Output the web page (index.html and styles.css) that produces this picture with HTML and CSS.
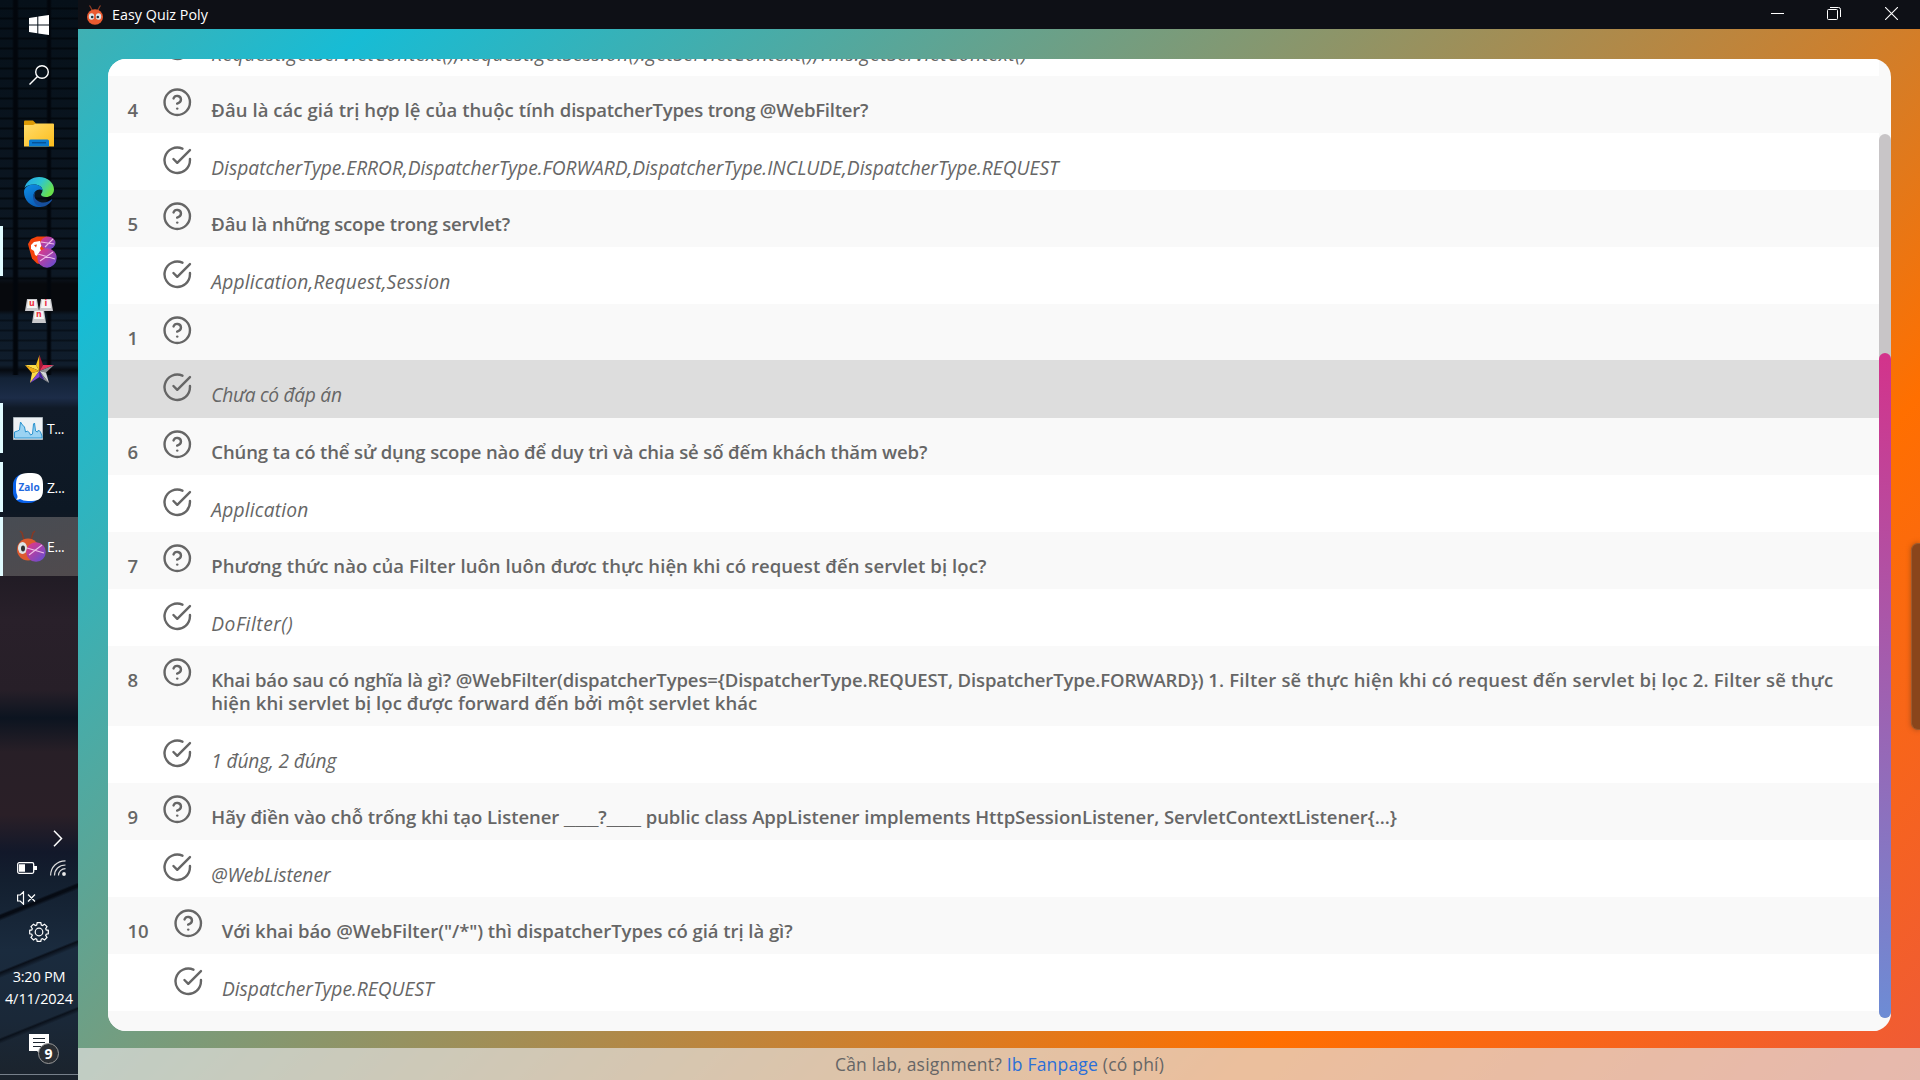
FILE: index.html
```
<!DOCTYPE html>
<html lang="vi">
<head>
<meta charset="utf-8">
<title>Easy Quiz Poly</title>
<link rel="stylesheet" href="styles.css">
</head>
<body>
<svg class="defs" aria-hidden="true">
  <symbol id="help" viewBox="0 0 24 24"><circle cx="12" cy="12" r="10"/><path d="M9.09 9a3 3 0 0 1 5.83 1c0 2-3 3-3 3"/><path d="M12 17h.01"/></symbol>
  <symbol id="check" viewBox="0 0 24 24"><path d="M22 11.08V12a10 10 0 1 1-5.93-9.14"/><path d="M22 4 12 14.01l-3-3"/></symbol>
  <linearGradient id="ball" x1="0" y1="0" x2="1" y2="1"><stop offset=".2" stop-color="#cf3b92"/><stop offset="1" stop-color="#5b4fd8"/></linearGradient>
</svg>
<div class="desktop">
  <aside class="taskbar">
    <div class="task start"><svg width="20" height="20" viewBox="0 0 20 20"><path fill="#fff" d="M0 3l8.3-1.200v7.700H0zM9.300 1.600 20 0v9.500H9.300zM0 10.500h8.300v7.700L0 17zM9.300 10.500H20V20L9.300 18.400z"/></svg></div>
    <div class="task search"><svg width="20" height="20" viewBox="0 0 20 20" fill="none" stroke="#fff" stroke-width="1.400"><circle cx="13" cy="7" r="6.300"/><path d="M8.500 11.500.5 19.500"/></svg></div>
    <div class="task"><svg width="30" height="27" viewBox="0 0 30 27"><defs><linearGradient id="fold" x1="0" y1="0" x2="1" y2="1"><stop offset="0" stop-color="#ffdc6b"/><stop offset="1" stop-color="#fdbd1c"/></linearGradient></defs><path fill="#dc9a05" d="M0 1.500Q0 .5 1 .5h8l3 3v3H0z"/><path fill="url(#fold)" d="M0 5h9l3-1.500h17q1 0 1 1V26.500H0z"/><path fill="#0b7bd0" d="M5 26.500V21q0-1.500 1.500-1.500h17Q25 19.500 25 21v5.500z"/><path stroke="#07427c" d="M8 22.800h14"/></svg></div>
    <div class="task edge"><svg width="30" height="30" viewBox="0 0 30 30"><defs><linearGradient id="e1" x1="0" y1="0" x2="1" y2=".5"><stop offset="0" stop-color="#22a5ee"/><stop offset=".55" stop-color="#2fc6cf"/><stop offset="1" stop-color="#68e04c"/></linearGradient><linearGradient id="e2" x1="0" y1="0" x2=".4" y2="1"><stop offset="0" stop-color="#0d8fe6"/><stop offset="1" stop-color="#0b5fb9"/></linearGradient></defs><path fill="url(#e1)" d="M.5 11C2 4.500 8 0 15 0c9 0 15 6 15 12.500 0 5-4 7.500-8 7.500-3 0-5-1-5-2.500 0-1 1.500-1.500 1.500-4C18.500 10 15 7.500 10 7.500 5.500 7.500 2 9 .5 11z"/><path fill="url(#e2)" d="M0 15C0 10 5 7.500 10 7.500c5 0 8.500 2.500 8.500 5.500-5-2-9 1.500-9 6 0 5 4 9 8.500 10.500-1 .5-2 .5-3 .5C6.500 30 0 23 0 15z"/><path fill="#164f9e" d="M12.500 14.500C9 17 10 23 16 25c5 1.500 9-.5 11.500-2.500.5-.5 1 0 .5.800C25 28 20 30 16.500 29.800 9 28 6.500 18 12.500 14.500z"/></svg></div>
    <div class="task running"><svg width="30" height="32" viewBox="0 0 30 32"><path fill="#f4430c" d="M4 3 10 .5h10l5 5-3 14-6 9-6-1-5-5L2 12 1 8z"/><path fill="#fff" d="M4 9l3-3 6-1 2 4-2 3 1 3-3 3-1 2-2-1-1-4-3-2z"/><path fill="#f4430c" d="M7 9l3-.5-1 3z"/><ellipse cx="21" cy="7" rx="7.500" ry="6.500" fill="url(#ball)"/><circle cx="20" cy="22" r="9.700" fill="url(#ball)"/><path stroke="#eebce8" stroke-width="1.100" d="M14 6l13 2M18 11l8-8M11 18l17 5M13 25l13-9"/></svg></div>
    <div class="task"><svg class="keys" width="28" height="24" viewBox="0 0 28 24"><g fill="#c9c9cc"><path d="M2 0h10l2 12H0zM16 0h10l2 12H14zM9 11h10l2 13H7z"/></g><g fill="#f5f5f5"><path d="M3 1h8l1 8H2zM17 1h8l1 8H16zM10 12h8l1 8H9z"/></g><g fill="#ee3344"><text x="4" y="7">u</text><text x="19.500" y="7">i</text><text x="11" y="18">n</text></g></svg></div>
    <div class="task star"><svg width="29" height="28" viewBox="0 0 29 28"><path fill="#f9c31b" d="M14.500 0v16L11 10z"/><path fill="#fcdc48" d="M14.500 16 11 10 0 10z"/><path fill="#f2ac14" d="M0 10l14.500 6L7 18z"/><path fill="#fcdc48" d="M7 18 5 28l9.500-12z"/><path fill="#a31736" d="M14.500 0 18 10l-3.500 6z"/><path fill="#e5345c" d="M18 10h11l-14.500 6z"/><path fill="#8d8d91" d="M29 10l-8 7.500-6.500-1.500z"/><path fill="#d5d5d8" d="M21 17.500 24 28 14.500 16z"/><path fill="#8d8d91" d="M14.500 16v6L24 28z"/><path fill="#8146d3" d="M14.500 16 5 28l9.500-6z"/><path fill="#43209b" d="M14.500 16v6l5 3z"/></svg></div>
    <div class="task wide running"><svg width="30" height="23" viewBox="0 0 30 23"><path fill="#edf1f5" stroke="#aab4bb" d="M.5.500h29v22H.5z"/><path fill="#9bd3f3" stroke="#2b93cf" d="M1.500 21V15l3-1 2-1 1-8 2 3 2 2 1 5 2-1 2 2 1 2 2-1 1-10 1-1 1 8 2 1 1-2 2 2 1.500 4v2z"/></svg><span>T...</span></div>
    <div class="task wide running"><svg class="zalo" width="30" height="30" viewBox="0 0 30 30"><rect width="27" height="29" y="1" rx="11" fill="#0a62ea"/><path fill="#fff" d="M15 0h4q11 0 11 11v6q0 11-11 11h-4q-5 0-8-2-2 1-4 .5 2-1.500 1.500-3.500Q3 20 3 16v-5Q3 0 15 0z"/><text x="5.500" y="17.500">Zalo</text></svg><span>Z...</span></div>
    <div class="task wide running current"><svg class="ant" width="30" height="33" viewBox="0 0 30 33"><path fill="none" stroke="#843a26" stroke-width="1.500" d="M4 1l2 2 2 7M19 1l-2 2-2 7"/><ellipse cx="12" cy="19.500" rx="11" ry="11" fill="#dd5a2f"/><ellipse cx="6.500" cy="18" rx="4.500" ry="6" fill="#dfe5e6"/><ellipse cx="7" cy="18.500" rx="2" ry="3" fill="#333"/><circle cx="20" cy="22" r="9.800" fill="url(#ball)"/><path stroke="#eebce8" stroke-width="1.100" d="M11 18l17 5M13 25l13-10"/></svg><span>E...</span></div>
    <div class="tray">
      <div class="tray-more"><svg width="10" height="17" viewBox="0 0 10 17" fill="none" stroke="#fff" stroke-width="1.500"><path d="M1 .8l7.500 7.700L1 16.200"/></svg></div>
      <div class="tray-status"><svg width="20" height="12" viewBox="0 0 20 12"><rect x=".7" y=".7" width="16" height="10.600" rx="1.500" fill="none" stroke="#fff" stroke-width="1.300"/><path fill="#fff" d="M2 2.200h6v7.600H2zM17 4h3v4h-3z"/></svg><svg width="16" height="16" viewBox="0 0 16 16" fill="none" stroke="#ddd" stroke-width="1.200"><path d="M.6 15.500C.6 7 7 .8 15.500.8M4.500 15.500C4.500 9.500 9 5 15.500 5M8.500 15.500c0-4 3-6.800 7-6.800"/><circle cx="14" cy="14" r="1.300" fill="#fff"/></svg></div>
      <div class="tray-sound"><svg width="19" height="14" viewBox="0 0 19 14" fill="none" stroke="#fff" stroke-width="1.200"><path d="M.6 4h2.600L6.500.8v12.400L3.200 10H.6zM11 3.500l7 7M18 3.500l-7 7"/></svg></div>
      <div class="tray-gear"><svg width="20" height="20" viewBox="0 0 20 20" fill="none" stroke="#fff" stroke-width="1.200"><path d="M8.200.7h3.600l.5 2.300 1.200.5 2-1.300 2.500 2.500-1.300 2 .5 1.200 2.100.4v3.500l-2.100.4-.5 1.200 1.300 2-2.500 2.500-2-1.300-1.200.5-.5 2.200H8.200l-.5-2.200-1.200-.5-2 1.300L2 15.400l1.300-2-.5-1.200-2.100-.4V8.300l2.100-.4.5-1.200-1.300-2 2.500-2.500 2 1.300L7.700 3z"/><circle cx="10" cy="10" r="3.800"/></svg></div>
      <div class="clock"><span>3:20 PM</span><span>4/11/2024</span></div>
      <div class="notices"><svg width="20" height="20" viewBox="0 0 20 20"><path fill="#fff" d="M0 0h20v17h-6l-3 3-3-3H0z"/><path stroke="#1c2530" d="M4 4.500h12M4 8.500h12M4 12.500h8"/></svg><b class="badge">9</b></div>
    </div>
  </aside>

  <main class="window">
    <header class="titlebar">
      <svg width="16" height="20" viewBox="0 0 16 20"><path fill="none" stroke="#943d24" stroke-width="1.200" d="M2.500.5l1 1.500 2 4M13.500.5l-1 1.500-2 4"/><ellipse cx="8" cy="12" rx="8" ry="7.700" fill="#ea5a30"/><ellipse cx="4.500" cy="11.500" rx="2.700" ry="3.200" fill="#dfe5e8"/><ellipse cx="11.500" cy="11.500" rx="2.700" ry="3.200" fill="#dfe5e8"/><circle cx="5.200" cy="12" r="1.300" fill="#20303c"/><circle cx="10.800" cy="12" r="1.300" fill="#20303c"/></svg>
      <h1>Easy Quiz Poly</h1>
      <div class="controls">
        <svg width="13" height="13" viewBox="0 0 13 13"><path stroke="#fff" d="M0 6.500h13"/></svg>
        <svg width="14" height="13" viewBox="0 0 14 13" fill="none" stroke="#fff"><rect x=".5" y="2.500" width="10" height="10" rx="1"/><path d="M3 .5h8.500q2 0 2 2V10"/></svg>
        <svg width="13" height="13" viewBox="0 0 13 13"><path stroke="#fff" stroke-width="1.100" d="M0 0l13 13M13 0 0 13"/></svg>
      </div>
    </header>
    <div class="page">
      <section class="card">
        <ol class="quiz">
          <li class="answer"><i></i><svg><use href="#check"/></svg><p class="w-ctx">Request.getServletContext(),Request.getSession().getServletContext(),This.getServletContext()</p></li>
          <li class="question"><i>4</i><svg><use href="#help"/></svg><p class="w-7">Đâu là các giá trị hợp lệ của thuộc tính <span class="w-tight">dispatcherTypes trong @WebFilter?</span></p></li>
          <li class="answer"><i></i><svg><use href="#check"/></svg><p>DispatcherType.ERROR,DispatcherType.FORWARD,DispatcherType.INCLUDE,DispatcherType.REQUEST</p></li>
          <li class="question"><i>5</i><svg><use href="#help"/></svg><p class="w-5">Đâu là những scope trong servlet?</p></li>
          <li class="answer"><i></i><svg><use href="#check"/></svg><p class="w-app">Application,Request,Session</p></li>
          <li class="question blank"><i>1</i><svg><use href="#help"/></svg><p></p></li>
          <li class="answer hover"><i></i><svg><use href="#check"/></svg><p class="w-none">Chưa có đáp án</p></li>
          <li class="question"><i>6</i><svg><use href="#help"/></svg><p class="w-6">Chúng ta có thể sử dụng scope nào để duy trì và chia sẻ số đếm khách thăm web?</p></li>
          <li class="answer"><i></i><svg><use href="#check"/></svg><p class="w-app">Application</p></li>
          <li class="question"><i>7</i><svg><use href="#help"/></svg><p class="w-7">Phương thức nào của Filter luôn luôn đươc thực hiện khi có request đến servlet bị lọc?</p></li>
          <li class="answer"><i></i><svg><use href="#check"/></svg><p class="w-ctx">DoFilter()</p></li>
          <li class="question"><i>8</i><svg><use href="#help"/></svg><p><span class="w-6">Khai báo sau có nghĩa là gì? </span><span class="w-6">@WebFilter(dispatcherTypes={DispatcherType.REQUEST, DispatcherType.FORWARD}) </span><span class="w-app">1. Filter sẽ thực hiện khi có request đến servlet bị lọc 2. Filter sẽ thực </span><br><span class="w-7">hiện khi servlet bị lọc được forward đến bởi một servlet khác</span></p></li>
          <li class="answer"><i></i><svg><use href="#check"/></svg><p class="w-right">1 đúng, 2 đúng</p></li>
          <li class="question"><i>9</i><svg><use href="#help"/></svg><p class="w-4">Hãy điền vào chỗ trống khi tạo Listener <span class="fill">___</span>?<span class="fill">___</span> public class AppListener implements HttpSessionListener, ServletContextListener{...}</p></li>
          <li class="answer"><i></i><svg><use href="#check"/></svg><p class="w-4">@WebListener</p></li>
          <li class="question"><i>10</i><svg><use href="#help"/></svg><p class="w-4">Với khai báo @WebFilter("/*") thì dispatcherTypes có giá trị là gì?</p></li>
          <li class="answer ten"><i></i><svg><use href="#check"/></svg><p>DispatcherType.REQUEST</p></li>
          <li class="question"></li>
        </ol>
        <div class="scroll"><div class="track"><div class="thumb"></div></div></div>
      </section>
    </div>
    <footer>Cần lab, asignment? <a>Ib Fanpage</a> (có phí)</footer>
    <div class="side-handle"></div>
  </main>
</div>
</body>
</html>
```
FILE: styles.css
```
* { box-sizing: border-box; }
body { margin: 0; font-family: "Open Sans", "Noto Sans", sans-serif; color: #666; overflow: hidden; }
.defs { position: absolute; width: 0; height: 0; }
.desktop { display: flex; width: 1920px; height: 1080px; }

/* Windows taskbar */
.taskbar {
  width: 78px; height: 1080px; display: flex; flex-direction: column; color: #fff;
  background:
    linear-gradient(90deg, transparent 12px, #02060c 14px 17px, transparent 19px 46px, #02060c 48px 50px, transparent 52px) 0 0 / 78px 375px no-repeat,
    repeating-linear-gradient(180deg, transparent 0 7px, rgba(0,4,8,.7) 8px 9px, transparent 10px) 0 0 / 78px 280px no-repeat,
    repeating-linear-gradient(180deg, transparent 0 7px, rgba(0,4,8,.45) 8px 9px, transparent 10px) 0 312px / 78px 56px no-repeat,
    linear-gradient(158deg, transparent 59px, #060b14 61px 63px, transparent 66px 112px, #090f19 114px, transparent 119px 174px, #0a111b 176px, transparent 180px) 0 850px / 78px 230px no-repeat,
    linear-gradient(180deg, #061019 0, #0d1824 275px, #07090d 284px 310px, #0d1a28 315px, #101d2c 365px, #060a10 370px, #132236 378px, #1c2c48 398px, #101a27 408px, #0d1824 510px, #201b24 570px, #29202a 620px, #271f28 690px, #0c1420 718px, #281f27 752px, #2a1f27 815px, #12182a 852px, #131f2f 880px, #1a2b3e 950px, #1a2838 1020px, #1b232c 1080px);
}
.task { height: 59px; flex: none; display: flex; align-items: center; justify-content: center; }
.task svg { flex: none; }
.start { height: 50px; }
.search { height: 54px; padding-bottom: 4px; }
.edge, .star { padding-bottom: 2px; }
.running { border-image: linear-gradient(180deg, transparent 5px, #e0fbff 5px 53px, transparent 53px) 1; border-width: 0 0 0 3px; border-style: solid; padding-left: 3px; }
.wide { justify-content: flex-start; padding-left: 10px; gap: 4px; font-size: 14px; }
.wide span { letter-spacing: -.4px; }
.current { background: linear-gradient(160deg, #474c53, #504a4d); border-image: linear-gradient(#e0fbff, #e0fbff) 1; padding-left: 13px; gap: 1px; }
.keys { font: bold 8px "DejaVu Sans", sans-serif; }
.zalo { font: bold 10px "Open Sans", sans-serif; fill: #1f6ae0; }
.tray { margin-top: auto; height: 260px; display: flex; flex-direction: column; }
.tray svg { flex: none; }
.tray-more { height: 36px; display: flex; align-items: center; padding-left: 53px; }
.tray-status { height: 24px; display: flex; align-items: center; padding-left: 17px; gap: 13px; }
.tray-sound { height: 36px; display: flex; align-items: center; padding-left: 17px; }
.tray-gear { height: 32px; display: flex; align-items: center; justify-content: center; }
.clock { height: 86px; padding-top: 18px; display: flex; flex-direction: column; align-items: center; font-size: 14.500px; line-height: 22px; }
.clock span { white-space: nowrap; letter-spacing: -.25px; }
.clock span:last-child { letter-spacing: -.05px; }
.notices { position: relative; flex: 1; padding-left: 29px; background: linear-gradient(#77808a, #77808a) 0 40px / 78px 1px no-repeat; }
.badge { position: absolute; left: 38px; top: 9px; width: 21px; height: 21px; border: 1px solid #999; border-radius: 50%; background: #2b2f34; font-size: 14px; line-height: 19px; text-align: center; }

/* Application window */
.window { flex: 1; position: relative; display: flex; flex-direction: column; background: linear-gradient(135deg, #40b0b3 0, #17bcd5 204px, #ff6f00 1561px, #ef5a37 2046px) 0 29px / 1842px 1051px no-repeat; }
.titlebar { height: 29px; flex: none; background: #0e1016; color: #fff; display: flex; align-items: center; padding: 0 22px 0 9px; }
.titlebar h1 { margin: 0 0 0 9px; font-size: 14.300px; font-weight: 400; line-height: 29px; letter-spacing: .03px; }
.controls { margin-left: auto; display: flex; gap: 44px; padding-bottom: 2px; }
.controls svg:nth-child(2) { margin-left: -1px; }
.page { flex: 1; min-height: 0; padding: 30px 29px 17px 30px; }
.card { height: 972px; display: flex; overflow: hidden; border-radius: 18px; background: #f9f9f9; }
.quiz { flex: 1; margin: -40px 0 0; padding: 0; list-style: none; }
.quiz li { display: flex; align-items: flex-start; min-height: 57px; padding-left: 19.500px; }
.quiz i { min-width: 10.600px; font-style: normal; }
.quiz svg { flex: none; width: 30.500px; height: 30.500px; margin: -11px 18.700px 0 24px; fill: none; stroke: #666; stroke-width: 1.900; stroke-linecap: round; stroke-linejoin: round; }
.quiz p { margin: 0; white-space: nowrap; }
.question { padding-top: 22px; padding-bottom: 12px; background: #f9f9f9; font-size: 18.500px; font-weight: 600; line-height: 23px; }
.answer { padding-top: 23px; padding-bottom: 11px; background: #fff; font-size: 19.200px; font-style: italic; line-height: 23px; }
.quiz .blank { height: 56px; min-height: 56px; }
.quiz .hover { min-height: 58px; background: #ddd; }
.quiz .ten i { min-width: 21.200px; }
.w-ctx { letter-spacing: .51px; }
.w-4 { letter-spacing: -.04px; }
.w-tight { letter-spacing: -.21px; }
.w-5 { letter-spacing: -.16px; }
.w-app { letter-spacing: .19px; }
.w-none { letter-spacing: -.3px; }
.w-6 { letter-spacing: -.12px; }
.w-7 { letter-spacing: .07px; }
.w-right { letter-spacing: -.15px; }
.fill { font: 700 20.500px/1 "Liberation Sans", sans-serif; letter-spacing: 0; }
.scroll { width: 12px; padding-top: 75px; }
.track { height: 884px; padding-top: 219px; border-radius: 6px; background: #c8c5c7; }
.thumb { height: 665px; border-radius: 6px; background: linear-gradient(#d3338b, #6d8cd5); }
footer { height: 32px; flex: none; padding-left: 1px; background: rgba(227,225,223,.7); font-size: 17.500px; line-height: 32px; text-align: center; letter-spacing: .2px; }
footer a { color: #2b6fd8; }
.side-handle { position: absolute; right: 0; top: 543px; width: 9px; height: 187px; border: 1px solid #9d5a2e; border-right: 0; border-radius: 7px 0 0 7px; background: #8a451b; box-shadow: 0 0 5px rgba(90,50,20,.5); }
```
